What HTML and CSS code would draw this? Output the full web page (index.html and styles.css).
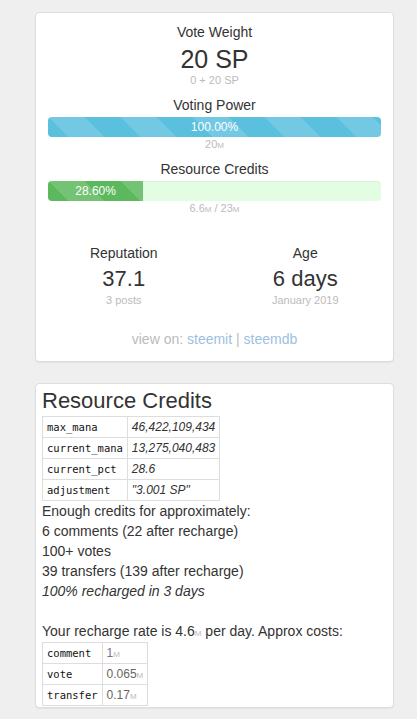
FILE: index.html
```html
<!DOCTYPE html>
<html lang="en">
<head>
    <meta charset="UTF-8">
    <meta name="viewport" content="width=device-width, initial-scale=1.0">
    <title>Account</title>
    <link rel="stylesheet" href="styles.css">
</head>
<body>
    <div class="page">
        <div class="panel panel-summary">
            <div class="stat-label">Vote Weight</div>
            <div class="stat-big">20 SP</div>
            <div class="stat-sub">0 + 20 SP</div>

            <div class="stat-label gap">Voting Power</div>
            <div class="progress">
                <div class="progress-bar bar-info" style="width: 100%">100.00%</div>
            </div>
            <div class="stat-sub">20<span class="unit">M</span></div>

            <div class="stat-label gap">Resource Credits</div>
            <div class="progress progress-rc">
                <div class="progress-bar bar-success" style="width: 28.6%">28.60%</div>
            </div>
            <div class="stat-sub">6.6<span class="unit">M</span> / 23<span class="unit">M</span></div>

            <div class="row">
                <div class="col">
                    <div class="stat-label">Reputation</div>
                    <div class="stat-mid">37.1</div>
                    <div class="stat-sub">3 posts</div>
                </div>
                <div class="col">
                    <div class="stat-label">Age</div>
                    <div class="stat-mid">6 days</div>
                    <div class="stat-sub">January 2019</div>
                </div>
            </div>

            <div class="view-on">
                view on: <a href="#">steemit</a> | <a href="#">steemdb</a>
            </div>
        </div>

        <div class="panel panel-rc">
            <h2 class="rc-title">Resource Credits</h2>
            <table class="kv-table">
                <tr><td class="key">max_mana</td><td class="val">46,422,109,434</td></tr>
                <tr><td class="key">current_mana</td><td class="val">13,275,040,483</td></tr>
                <tr><td class="key">current_pct</td><td class="val">28.6</td></tr>
                <tr><td class="key">adjustment</td><td class="val">"3.001 SP"</td></tr>
            </table>
            <div class="rc-lines">
                <div>Enough credits for approximately:</div>
                <div>6 comments (22 after recharge)</div>
                <div>100+ votes</div>
                <div>39 transfers (139 after recharge)</div>
                <div><em>100% recharged in 3 days</em></div>
                <div class="blank"></div>
                <div>Your recharge rate is 4.6<span class="unit">M</span> per day. Approx costs:</div>
            </div>
            <table class="kv-table cost-table">
                <tr><td class="key">comment</td><td class="val cost-first">1<span class="unit">M</span></td></tr>
                <tr><td class="key">vote</td><td class="val">0.065<span class="unit">M</span></td></tr>
                <tr><td class="key">transfer</td><td class="val">0.17<span class="unit">M</span></td></tr>
            </table>
        </div>
    </div>
</body>
</html>
```

FILE: styles.css
```css
:root {
    --text: #333;
    --muted: #bbb;
    --border: #ddd;
    --info: #5bc0de;
    --success: #5cb85c;
}

* {
    box-sizing: border-box;
}

body {
    margin: 0;
    background: #efefef;
    color: var(--text);
    font-family: "Liberation Sans", Arial, sans-serif;
    font-size: 14px;
    line-height: 20px;
}

.page {
    padding: 12px 23px 10px 35px;
}

.panel {
    background: #fff;
    border: 1px solid var(--border);
    border-radius: 4px;
    box-shadow: 0 1px 1px rgba(0, 0, 0, 0.05);
}

/* top summary card */
.panel-summary {
    padding: 9px 12px 12px;
    text-align: center;
}

.stat-label {
    font-size: 14px;
    line-height: 20px;
}

.stat-label.gap {
    margin-top: 8px;
}

.stat-big {
    font-size: 25px;
    line-height: 27px;
    margin-top: 4px;
}

.stat-mid {
    font-size: 22px;
    line-height: 26px;
    margin-top: 3px;
}

.stat-sub {
    font-size: 11px;
    line-height: 14px;
    color: var(--muted);
}

/* small "M" suffix, kept out of the line height */
.unit {
    font-size: 8px;
    line-height: 0;
    color: var(--muted);
}

.progress {
    height: 20px;
    margin-top: 2px;
    border-radius: 4px;
    overflow: hidden;
    display: flex;
    background: #f5f5f5;
}

.progress-rc {
    background: #e2fde2;
    box-shadow: inset 0 1px 1px rgba(0, 0, 0, 0.04);
}

.progress-bar {
    height: 100%;
    color: #fff;
    font-size: 12px;
    line-height: 20px;
    text-align: center;
    background-image: linear-gradient(45deg,
        rgba(255, 255, 255, 0.15) 25%, transparent 25%,
        transparent 50%, rgba(255, 255, 255, 0.15) 50%,
        rgba(255, 255, 255, 0.15) 75%, transparent 75%, transparent);
    background-size: 72px 72px;
}

.bar-info {
    background-color: var(--info);
}

.bar-success {
    background-color: var(--success);
}

.row {
    display: flex;
    margin: 28px -15px 0;
}

.row .col {
    flex: 1;
}

.row .stat-sub {
    margin-top: 1px;
}

.view-on {
    margin-top: 22px;
    color: var(--muted);
}

.view-on a {
    color: #9dbfe0;
    text-decoration: none;
}

/* resource credits card */
.panel-rc {
    margin-top: 21px;
    padding: 5px 6px 1px;
}

.rc-title {
    margin: 0 0 3px;
    font-size: 22px;
    line-height: 24px;
    font-weight: normal;
}

.kv-table {
    border-collapse: collapse;
}

.kv-table td {
    border: 1px solid var(--border);
    padding: 2px 4px;
    line-height: 16px;
    white-space: nowrap;
}

.kv-table .key {
    font-family: "DejaVu Sans Mono", "Liberation Mono", monospace;
    font-size: 10.5px;
    color: #111;
}

.kv-table .val {
    font-size: 12px;
    font-style: italic;
    color: #333;
}

.cost-table {
    margin-top: 1px;
}

.cost-table .val {
    font-style: normal;
    color: #666;
}

.cost-table .cost-first {
    color: #8a6a8a;
}

.rc-lines .blank {
    height: 20px;
}
```
